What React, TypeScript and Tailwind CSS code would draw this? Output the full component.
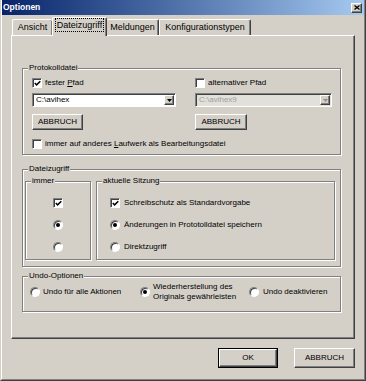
import React from 'react';

const raised =
  'border border-t-white border-l-white border-r-[#404040] border-b-[#404040] bg-[#d4d0c8] shadow-[inset_-1px_-1px_0_#808080]';
const sunken =
  'border border-t-[#808080] border-l-[#808080] border-r-white border-b-white shadow-[inset_1px_1px_0_#404040]';

function CheckMark() {
  return (
    <svg width="7" height="7" viewBox="0 0 7 7">
      <path d="M0.8 3 L2.6 4.9 L6.3 1.2" fill="none" stroke="#000" strokeWidth="1.5" />
    </svg>
  );
}

function CheckBox({ checked = false }: { checked?: boolean }) {
  return (
    <span className={`flex h-[10px] w-[10px] shrink-0 items-center justify-center bg-white ${sunken}`}>
      {checked && <CheckMark />}
    </span>
  );
}

function Radio({ checked = false }: { checked?: boolean }) {
  return (
    <span
      className={`flex h-[10px] w-[10px] shrink-0 items-center justify-center rounded-full bg-white ${sunken}`}
    >
      {checked && <span className="h-[4px] w-[4px] rounded-full bg-black" />}
    </span>
  );
}

function Group({
  title,
  className,
  children,
}: {
  title: string;
  className: string;
  children: React.ReactNode;
}) {
  return (
    <fieldset
      className={`border border-[#808080] shadow-[inset_1px_1px_0_#fff,1px_1px_0_#fff] ${className}`}
    >
      <legend className="ml-[5px] bg-[#d4d0c8] px-[1px] leading-[10px]">{title}</legend>
      {children}
    </fieldset>
  );
}

function Combo({ value, disabled, className }: { value: string; disabled?: boolean; className: string }) {
  return (
    <div
      className={`flex h-[14px] p-[1px] ${sunken} ${
        disabled ? 'bg-[#e2e0da] text-[#a0a0a0]' : 'bg-white'
      } ${className}`}
    >
      <span className="flex-1 pl-[2px] leading-[10px]">{value}</span>
      <span className={`flex w-[10px] items-center justify-center ${raised}`}>
        <svg width="5" height="3" viewBox="0 0 5 3">
          <path d="M0 0h5L2.5 3z" fill={disabled ? '#909090' : '#000'} />
        </svg>
      </span>
    </div>
  );
}

function Button({ label, className }: { label: string; className: string }) {
  return (
    <div className={`flex items-center justify-center leading-[10px] ${raised} ${className}`}>{label}</div>
  );
}

export default function App() {
  return (
    <div className="flex h-[381px] w-[366px] flex-col overflow-hidden border-r border-b border-l border-r-[#404040] border-b-[#404040] border-l-[#d4d0c8] bg-[#d4d0c8] font-['Liberation_Sans',Arial,sans-serif] text-[8px] text-black">
      <div className="flex flex-1 flex-col border-r border-b border-l border-r-[#808080] border-b-[#808080] border-l-white">
        {/* title bar */}
        <div className="flex h-[15px] items-center justify-between bg-linear-to-r from-[#0a246a] to-[#a6caf0] pr-[2px] pl-[1px]">
          <span className="text-[8.5px] font-bold text-white">Optionen</span>
          <span className={`flex h-[10px] w-[11px] items-center justify-center ${raised}`}>
            <svg width="6" height="5" viewBox="0 0 6 5">
              <path d="M0.5 0.5 L5.5 4.5 M5.5 0.5 L0.5 4.5" stroke="#000" strokeWidth="1.3" />
            </svg>
          </span>
        </div>

        <div className="flex flex-col pl-[9px]">
          {/* tabs */}
          <div className="mt-[2px] flex h-[18px] items-end pl-[1px] text-[9px]">
            <div className="flex h-[16px] w-[40px] items-center justify-center rounded-t-[2px] border-t border-l border-t-white border-l-white shadow-[inset_-1px_0_0_#808080]">
              Ansicht
            </div>
            <div className="relative z-10 -mb-px flex h-[19px] w-[55px] items-start justify-center rounded-t-[2px] border-t border-r border-l border-t-white border-r-[#404040] border-l-white bg-[#d4d0c8] pt-[1px] shadow-[inset_-1px_0_0_#808080]">
              <span className="px-[1px] leading-[12px] outline-1 outline-offset-0 outline-black outline-dotted">
                Dateizugriff
              </span>
            </div>
            <div className="flex h-[16px] w-[52px] items-center justify-center rounded-t-[2px] border-t border-r border-t-white border-r-[#404040] shadow-[inset_-1px_0_0_#808080]">
              Meldungen
            </div>
            <div className="flex h-[16px] w-[92px] items-center justify-center rounded-t-[2px] border-t border-r border-l border-t-white border-r-[#404040] border-l-white shadow-[inset_-1px_0_0_#808080]">
              Konfigurationstypen
            </div>
          </div>

          {/* tab panel */}
          <div className="flex h-[304px] w-[344px] flex-col border-t border-r border-b border-l border-t-white border-r-[#404040] border-b-[#404040] border-l-white pt-[27px] pl-[10px] shadow-[inset_-1px_-1px_0_#808080]">
            <Group title="Protokolldatei" className="w-[319px]">
              <div className="flex flex-col pt-[5px] pb-[5px] pl-[9px]">
                <div className="flex">
                  <div className="flex w-[163px] flex-col">
                    <label className="flex h-[10px] items-center gap-[3px]">
                      <CheckBox checked />
                      <span>
                        fester <span className="underline">P</span>fad
                      </span>
                    </label>
                    <Combo value={'C:\\avihex'} className="mt-[5px] w-[144px]" />
                    <Button label="ABBRUCH" className="mt-[7px] h-[16px] w-[51px]" />
                  </div>
                  <div className="flex flex-col">
                    <label className="flex h-[10px] items-center gap-[3px]">
                      <CheckBox />
                      <span>alternativer Pfad</span>
                    </label>
                    <Combo value={'C:\\avihex9'} disabled className="mt-[5px] w-[137px]" />
                    <Button label="ABBRUCH" className="mt-[7px] h-[16px] w-[52px]" />
                  </div>
                </div>
                <label className="mt-[9px] flex h-[10px] items-center gap-[3px]">
                  <CheckBox />
                  <span>
                    immer auf anderes <span className="underline">L</span>aufwerk als Bearbeitungsdatei
                  </span>
                </label>
              </div>
            </Group>

            <Group title="Dateizugriff" className="mt-[9px] w-[319px]">
              <div className="flex pt-[2px] pb-[6px] pl-[2px]">
                <Group title="immer" className="h-[84px] w-[66px]">
                  <div className="flex flex-col items-center pt-[6px]">
                    <div className="flex h-[22px] items-center">
                      <CheckBox checked />
                    </div>
                    <div className="flex h-[22px] items-center">
                      <Radio checked />
                    </div>
                    <div className="flex h-[22px] items-center">
                      <Radio />
                    </div>
                  </div>
                </Group>
                <Group title="aktuelle Sitzung" className="ml-[5px] h-[84px] w-[239px]">
                  <div className="flex flex-col pt-[6px] pl-[13px]">
                    <label className="flex h-[22px] items-center gap-[4px]">
                      <CheckBox checked />
                      <span>Schreibschutz als Standardvorgabe</span>
                    </label>
                    <label className="flex h-[22px] items-center gap-[4px]">
                      <Radio checked />
                      <span>Änderungen in Prototolldatei speichern</span>
                    </label>
                    <label className="flex h-[22px] items-center gap-[4px]">
                      <Radio />
                      <span>Direktzugriff</span>
                    </label>
                  </div>
                </Group>
              </div>
            </Group>

            <Group title="Undo-Optionen" className="mt-[4px] w-[319px]">
              <div className="flex items-center pt-[1px] pb-[9px] pl-[7px]">
                <label className="flex w-[110px] items-center gap-[3px]">
                  <Radio />
                  <span>Undo für alle Aktionen</span>
                </label>
                <label className="flex w-[109px] items-center gap-[3px]">
                  <Radio checked />
                  <span className="leading-[10px]">
                    Wiederherstellung des
                    <br />
                    Originals gewährleisten
                  </span>
                </label>
                <label className="flex items-center gap-[4px]">
                  <Radio />
                  <span>Undo deaktivieren</span>
                </label>
              </div>
            </Group>
          </div>

          {/* dialog buttons */}
          <div className="mt-[9px] flex w-[344px] justify-end gap-[16px]">
            <div className="border border-black">
              <Button label="OK" className="h-[18px] w-[58px]" />
            </div>
            <Button label="ABBRUCH" className="h-[20px] w-[61px]" />
          </div>
        </div>
      </div>
    </div>
  );
}
